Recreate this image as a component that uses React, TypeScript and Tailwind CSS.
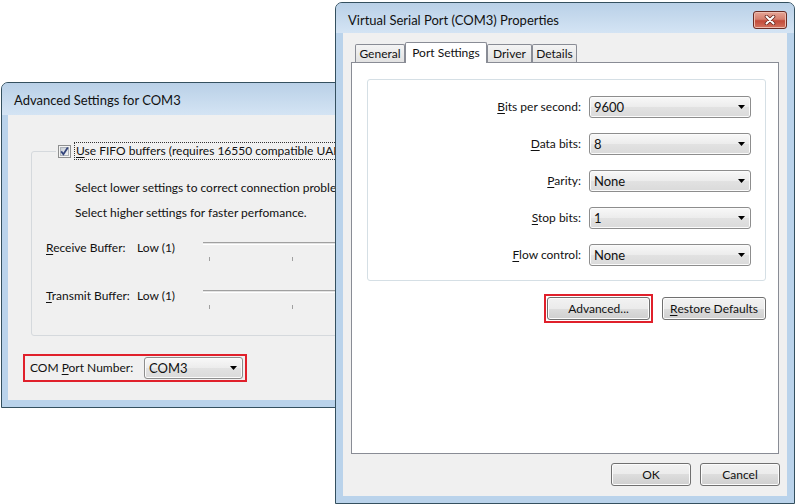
import React from "react";

const font = "font-[family-name:Lato,'Noto_Sans',sans-serif]";

// access-key letter, underlined like a Win32 mnemonic
function Key({ children }: { children: React.ReactNode }) {
  return <span className="underline underline-offset-[2px]">{children}</span>;
}

function Arrow() {
  return (
    <svg width="7" height="4" viewBox="0 0 7 4" className="shrink-0">
      <path d="M0 0H7L3.5 4Z" fill="#000" />
    </svg>
  );
}

function Combo({ value, className = "" }: { value: string; className?: string }) {
  return (
    <div
      className={`flex h-[22px] items-center justify-between rounded-[3px] border border-[#8d8d8d] bg-[linear-gradient(#f8f8f8,#ececec_50%,#e2e2e2_50%,#dadada)] pl-[4px] pr-[5px] shadow-[inset_0_0_0_1px_#fbfbfb] ${className}`}
    >
      <span className="text-[13px]">{value}</span>
      <Arrow />
    </div>
  );
}

function Button({ children, className = "" }: { children: React.ReactNode; className?: string }) {
  return (
    <button
      type="button"
      className={`flex h-[23px] items-center justify-center rounded-[3px] border border-[#707070] bg-[linear-gradient(#f2f2f2,#ebebeb_50%,#dddddd_50%,#cfcfcf)] shadow-[inset_0_0_0_1px_#fcfcfc] ${className}`}
    >
      {children}
    </button>
  );
}

function Checkbox() {
  return (
    <svg width="13" height="13" viewBox="0 0 13 13" className="shrink-0">
      <defs>
        <linearGradient id="cbFill" x1="0" y1="0" x2="1" y2="1">
          <stop offset="0" stopColor="#c6ccd4" />
          <stop offset="1" stopColor="#f6f6f6" />
        </linearGradient>
      </defs>
      <rect x="0.5" y="0.5" width="12" height="12" fill="#f4f4f4" stroke="#8e8f8f" />
      <rect x="2.5" y="2.5" width="8" height="8" fill="url(#cbFill)" stroke="#aeb3b9" />
      <path d="M3.2 6.4L5.4 9.2L9.8 2.6" fill="none" stroke="#34457c" strokeWidth="1.8" />
    </svg>
  );
}

function CloseButton() {
  return (
    <div className="flex h-[18px] w-[34px] items-center justify-center rounded-[3px] border border-[#6a2c24] bg-[linear-gradient(#e6a596,#d5806f_45%,#c24a39_55%,#d3735f)] shadow-[inset_0_0_0_1px_#eebcaf]">
      <svg width="12" height="10" viewBox="0 0 12 10">
        <path d="M2.5 1.5L9.5 8.5M9.5 1.5L2.5 8.5" stroke="#6b2a20" strokeWidth="3.6" strokeLinecap="round" />
        <path d="M2.5 1.5L9.5 8.5M9.5 1.5L2.5 8.5" stroke="#fff" strokeWidth="2" strokeLinecap="round" />
      </svg>
    </div>
  );
}

function Slider() {
  return (
    <div className="flex w-[160px] shrink-0 flex-col pt-[2px]">
      <div className="h-[3px] border-t border-[#a0a0a0] border-b border-b-[#ffffff] bg-[#e3e3e3]" />
      <div className="mt-[12px] flex gap-[82px] pl-[6px]">
        <div className="h-[4px] w-[1px] bg-[#a0a0a0]" />
        <div className="h-[4px] w-[1px] bg-[#a0a0a0]" />
      </div>
    </div>
  );
}

function AdvancedSettings() {
  return (
    <div
      className={`absolute left-[1px] top-[82px] flex h-[326px] w-[360px] flex-col rounded-t-[7px] border border-[#34505f] bg-[#bad3eb] ${font} whitespace-nowrap text-[12px] leading-[16px] text-[#111]`}
    >
      <div className="flex h-[32px] shrink-0 items-center rounded-t-[6px] bg-[linear-gradient(#b9d0e7,#d4e4f4)] pl-[12px] pt-[2px] text-[13px]">
        Advanced Settings for COM3
      </div>
      <div className="mx-[6px] flex flex-1 flex-col bg-[#f0f0f0]">
        <fieldset className="ml-[23px] mt-[27px] h-[194px] w-[330px] min-w-0 rounded-[3px] border border-[#d5d9dd]">
          <legend className="ml-[24px] flex items-center gap-[3px] px-[2px]">
            <Checkbox />
            <span className="border border-dotted border-[#333] px-[1px]">
              <Key>U</Key>se FIFO buffers (requires 16550 compatible UART)
            </span>
          </legend>
          <div className="mt-[20px] pl-[43px]">Select lower settings to correct connection problems.</div>
          <div className="mt-[9px] pl-[43px]">Select higher settings for faster perfomance.</div>
          <div className="mt-[19px] flex h-[22px] pl-[14px]">
            <span className="w-[91px] shrink-0">
              <Key>R</Key>eceive Buffer:
            </span>
            <span className="w-[66px] shrink-0">Low (1)</span>
            <Slider />
          </div>
          <div className="mt-[26px] flex h-[22px] pl-[14px]">
            <span className="w-[91px] shrink-0">
              <Key>T</Key>ransmit Buffer:
            </span>
            <span className="w-[66px] shrink-0">Low (1)</span>
            <Slider />
          </div>
        </fieldset>
        <div className="ml-[15px] mt-[18px] flex h-[28px] w-[224px] items-center border-2 border-[#e0202b] pl-[5px] pr-[2px]">
          <span className="w-[114px] shrink-0">
            COM <Key>P</Key>ort Number:
          </span>
          <Combo value="COM3" className="flex-1" />
        </div>
      </div>
      <div className="h-[7px] shrink-0" />
    </div>
  );
}

const rows = [
  { key: "B", rest: "its per second:", value: "9600" },
  { key: "D", rest: "ata bits:", value: "8" },
  { key: "P", rest: "arity:", value: "None" },
  { key: "S", rest: "top bits:", value: "1" },
  { key: "F", rest: "low control:", value: "None" },
];

const tabs = [
  { name: "General", w: "w-[50px]" },
  { name: "Port Settings", w: "w-[82px]", active: true },
  { name: "Driver", w: "w-[45px]" },
  { name: "Details", w: "w-[45px]" },
];

function PortProperties() {
  return (
    <div
      className={`absolute left-[335px] top-[2px] flex h-[502px] w-[460px] flex-col rounded-t-[7px] border border-[#34505f] bg-[#bad3eb] ${font} whitespace-nowrap text-[12px] leading-[16px] text-[#111]`}
    >
      <div className="flex h-[30px] shrink-0 items-center justify-between rounded-t-[6px] bg-[linear-gradient(#b9d0e7,#d4e4f4)] pl-[12px] pr-[7px] text-[13px]">
        <span className="pt-[3px]">Virtual Serial Port (COM3) Properties</span>
        <div className="pt-[3px]">
          <CloseButton />
        </div>
      </div>
      <div className="mx-[7px] flex flex-1 flex-col bg-[#f0f0f0] px-[8px] pt-[9px]">
        <div className="flex items-end pl-[4px]">
          {tabs.map((t) =>
            t.active ? (
              <div
                key={t.name}
                className={`relative z-[1] -mb-[1px] flex h-[21px] ${t.w} items-start justify-center rounded-t-[2px] border border-b-0 border-[#898c95] bg-white pt-[2px]`}
              >
                {t.name}
              </div>
            ) : (
              <div
                key={t.name}
                className={`flex h-[18px] ${t.w} items-center justify-center rounded-t-[2px] border border-b-0 border-[#898c95] bg-[linear-gradient(#f4f4f4,#e2e2e2)]`}
              >
                {t.name}
              </div>
            ),
          )}
        </div>
        <div className="flex h-[392px] flex-col border border-[#898c95] bg-white pl-[15px] pr-[12px] pt-[16px]">
          <div className="flex h-[202px] flex-col gap-[15px] rounded-[3px] border border-[#d5dfe5] pr-[14px] pt-[16px]">
            {rows.map((r) => (
              <div key={r.key} className="flex items-center justify-end gap-[8px]">
                <span>
                  <Key>{r.key}</Key>
                  {r.rest}
                </span>
                <Combo value={r.value} className="w-[162px]" />
              </div>
            ))}
          </div>
          <div className="mt-[13px] flex items-center justify-end gap-[9px]">
            <div className="border-2 border-[#e0202b] p-[1px]">
              <Button className="h-[22px] w-[103px]">Advanced...</Button>
            </div>
            <Button className="h-[22px] w-[104px]">
              <Key>R</Key>estore Defaults
            </Button>
          </div>
        </div>
        <div className="mr-[-1px] mt-[9px] flex justify-end gap-[9px]">
          <Button className="w-[80px]">OK</Button>
          <Button className="w-[80px]">Cancel</Button>
        </div>
      </div>
      <div className="h-[7px] shrink-0" />
    </div>
  );
}

export default function App() {
  return (
    <div className="relative h-[504px] w-[797px] overflow-hidden bg-white">
      <AdvancedSettings />
      <PortProperties />
    </div>
  );
}
